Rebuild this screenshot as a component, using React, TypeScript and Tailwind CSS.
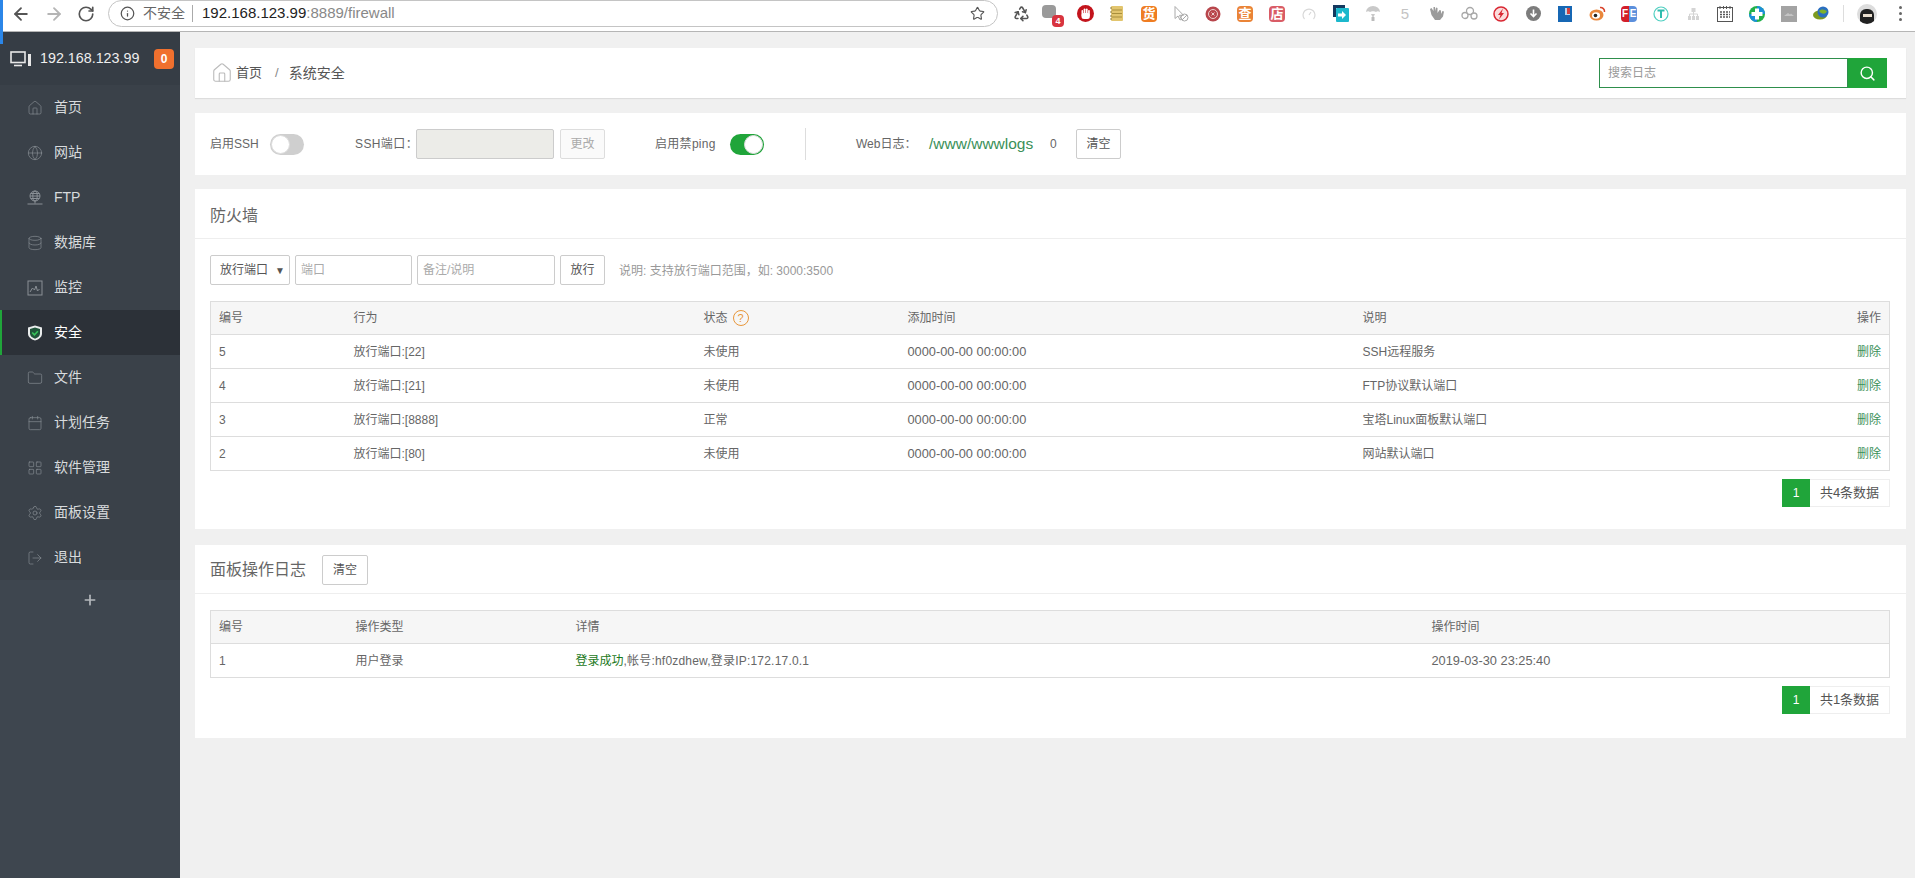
import React from 'react';
import {
  ArrowLeft,
  ArrowRight,
  RotateCw,
  Info,
  Star,
  Recycle,
  Search,
  House,
  Globe,
  Database,
  Folder,
  Calendar,
  LayoutGrid,
  Settings,
  LogOut,
  Plus,
} from 'lucide-react';

const GREEN = 'text-[#3a9058]';

// ---- browser toolbar extension icons ----
const ExtIcon: React.FC<{ children: React.ReactNode }> = ({ children }) => (
  <div className="w-8 h-7 flex items-center justify-center relative">{children}</div>
);

const GlyphBox: React.FC<{ text: string; className: string }> = ({ text, className }) => (
  <div className={`w-4 h-4 rounded-sm flex items-center justify-center text-[13px] leading-none font-bold text-white ${className}`}>
    {text}
  </div>
);

const extensions: React.ReactNode[] = [
  <Recycle key="a" className="w-[17px] h-[17px] text-[#555]" strokeWidth={2.2} />,
  <>
    <div className="w-[14px] h-[13px] rounded-sm bg-[#9a9a9a] -mt-1 -ml-2" />
    <div className="absolute left-[15px] top-[15px] w-[12px] h-[12px] rounded-sm bg-[#d8343f] text-white text-[9px] leading-[12px] font-bold text-center">4</div>
  </>,
  <svg width="17" height="17" viewBox="0 0 17 17">
    <circle cx="8.500" cy="8.500" r="8.500" fill="#c3141c" />
    <g fill="#fff">
      <rect x="4.500" y="5" width="1.700" height="6" rx=".8" />
      <rect x="6.700" y="3.500" width="1.700" height="7" rx=".8" />
      <rect x="8.900" y="3.500" width="1.700" height="7" rx=".8" />
      <rect x="11.100" y="5" width="1.700" height="6" rx=".8" />
      <rect x="4.500" y="8" width="8.300" height="6" rx="2.500" />
    </g>
  </svg>,
  <svg width="16" height="17" viewBox="0 0 16 17">
    <rect x="2" y="1" width="12" height="15" rx="1" fill="#e2c56e" />
    <path d="M3 5h10M3 8.500h10M3 12h10" stroke="#a98f3c" strokeWidth="1" />
    <path d="M1 3h2M1 7h2M1 11h2M1 14h2" stroke="#8a7a45" strokeWidth="1" />
  </svg>,
  <GlyphBox text="货" className="bg-[#ef7d22]" />,
  <svg width="18" height="18" viewBox="0 0 18 18" fill="none" stroke="#aaa" strokeWidth="1">
    <path d="M3 1.500v12l3-2.500 2 4 1.500-.8-2-3.900h4z" />
    <circle cx="12.500" cy="12.500" r="3.500" />
    <path d="M10 15l5-5" />
  </svg>,
  <svg width="16" height="16" viewBox="0 0 16 16">
    <circle cx="8" cy="8" r="7.500" fill="#b8464c" />
    <circle cx="8" cy="8" r="4.500" fill="none" stroke="#eecfcf" strokeWidth="1" />
    <path d="M6.500 6.500l3 3M9.500 6.500l-3 3" stroke="#eecfcf" strokeWidth="1" />
  </svg>,
  <GlyphBox text="查" className="bg-[#ea8437]" />,
  <GlyphBox text="店" className="bg-[#d95c66]" />,
  <svg width="14" height="14" viewBox="0 0 14 14" fill="none" stroke="#d8d8d8" strokeWidth="1.200">
    <path d="M2.500 12a6 6 0 1 1 9 0" />
    <path d="M7 8l2-3" />
  </svg>,
  <svg width="16" height="17" viewBox="0 0 16 17">
    <path d="M0 0h12v3H3v9H0z" fill="#14395f" />
    <rect x="3" y="3" width="13" height="14" rx="1" fill="#1cb8cc" />
    <path d="M5 8.500h4V6l4 4-4 4v-2.500H5z" fill="#fff" />
  </svg>,
  <svg width="16" height="17" viewBox="0 0 16 17" fill="#c9c9c9">
    <path d="M1 7a7 6 0 0 1 14 0c-1.500-1-3-1-4 0-1-1-5-1-6 0-1-1-2.500-1-4 0z" />
    <path d="M6 9l2 4 2-4z" />
    <rect x="6.500" y="12" width="3" height="4" rx=".5" fill="#bbb" />
  </svg>,
  <span className="text-[15px] leading-none text-[#c4c4c4]">5</span>,
  <svg width="17" height="17" viewBox="0 0 17 17" fill="#9b9b9b">
    <path d="M1 4l1.500-1 2 3V2h1.500v4l1-3.500L8.500 3v5l2-3 1.500.5v3.500l1.500-3 1.500.5-1 5-3 3.500H6L2.500 10z" />
  </svg>,
  <svg width="17" height="15" viewBox="0 0 17 15" fill="none" stroke="#a8a8a8" strokeWidth="1.300">
    <circle cx="4" cy="9.500" r="3" />
    <circle cx="9" cy="5" r="3.500" />
    <circle cx="13" cy="10" r="3" />
  </svg>,
  <svg width="16" height="16" viewBox="0 0 16 16">
    <circle cx="8" cy="8" r="7" fill="#fbdcdc" stroke="#d92732" strokeWidth="1.500" />
    <path d="M10 2.500L5 9h2.500L6 13.500 11 7H8.500z" fill="#d92732" />
  </svg>,
  <svg width="15" height="15" viewBox="0 0 15 15">
    <circle cx="7.500" cy="7.500" r="7.500" fill="#7c7c7c" />
    <path d="M7.500 3.500v7M4.500 7.500l3 3 3-3" fill="none" stroke="#fff" strokeWidth="1.600" />
  </svg>,
  <svg width="14" height="16" viewBox="0 0 14 16">
    <rect width="14" height="16" fill="#1667b4" />
    <rect x="7" y="2" width="5" height="7" fill="#b9d3ea" />
    <rect x="9" y="2" width="3" height="6" fill="#d2403e" />
  </svg>,
  <svg width="17" height="15" viewBox="0 0 17 15">
    <ellipse cx="7.500" cy="9" rx="7" ry="5.500" fill="#e9873c" />
    <ellipse cx="7" cy="9.500" rx="4" ry="3.200" fill="#fff" />
    <circle cx="6.500" cy="9.500" r="1.800" fill="#222" />
    <path d="M11 1.500a4 4 0 0 1 4.500 4.500" fill="none" stroke="#d9432c" strokeWidth="1.500" />
  </svg>,
  <div className="w-4 h-4 rounded-sm flex overflow-hidden text-[10px] leading-4 font-bold text-white text-center">
    <div className="w-1/2 bg-[#d31f2a]">F</div>
    <div className="w-1/2 bg-[#5b8fdc]">E</div>
  </div>,
  <svg width="16" height="16" viewBox="0 0 16 16" fill="none">
    <circle cx="8" cy="8" r="7" stroke="#4fcfc0" strokeWidth="1.200" />
    <path d="M4.500 4.500h7M8 4.500V12" stroke="#2fbcae" strokeWidth="2" />
  </svg>,
  <svg width="11" height="12" viewBox="0 0 11 12" fill="#d4d4d4">
    <rect x="3.500" y="0" width="4" height="4" />
    <rect x="0" y="8" width="3" height="4" />
    <rect x="4" y="8" width="3" height="4" />
    <rect x="8" y="8" width="3" height="4" />
    <path d="M1.500 8V6h8v2M5.500 4v4" fill="none" stroke="#d4d4d4" />
  </svg>,
  <svg width="16" height="16" viewBox="0 0 16 16" fill="none" stroke="#555">
    <rect x=".5" y="1.500" width="15" height="14" />
    <path d="M3 0v3M6.500 0v3M9.500 0v3M13 0v3" />
    <path d="M3 6h10M3 8.500h10M3 11h10" strokeWidth="1.400" strokeDasharray="2 1" />
  </svg>,
  <svg width="16" height="16" viewBox="0 0 16 16">
    <circle cx="8" cy="8" r="8" fill="#21b14a" />
    <path d="M8 0a8 8 0 0 1 8 8H8z" fill="#1b8fd9" />
    <path d="M0 8a8 8 0 0 0 8 8V8z" fill="#1b8fd9" />
    <path d="M6 2.500h4V6h3.500v4H10v3.500H6V10H2.500V6H6z" fill="#fff" />
  </svg>,
  <svg width="16" height="16" viewBox="0 0 16 16">
    <rect width="16" height="16" fill="#a3a3a3" />
    <path d="M3 10l4-3 2 1.500 1-1 3 2.500z" fill="#c4c4c4" />
  </svg>,
  <svg width="17" height="15" viewBox="0 0 17 15">
    <ellipse cx="7" cy="9" rx="7" ry="4.500" fill="#7c9a1f" />
    <circle cx="10" cy="6" r="5.500" fill="#2a6fc0" />
    <path d="M6 5c2-2 5-2 8 0-1 3-5 4-8 0z" fill="#7fb22a" />
  </svg>,
];

// ---- sidebar ----
const MonitorIcon = () => (
  <svg width="22" height="16" viewBox="0 0 22 16" fill="none" stroke="#e8e8e8" strokeWidth="1.600">
    <rect x="1" y="1" width="14" height="10.500" />
    <path d="M4 14.500h8" />
    <rect x="18" y="3" width="3" height="12" fill="#e8e8e8" stroke="none" />
  </svg>
);

const FtpIcon = ({ className }: { className?: string }) => (
  <svg className={className} viewBox="0 0 16 16" fill="none" stroke="currentColor" strokeWidth="1">
    <circle cx="8" cy="6" r="5" />
    <ellipse cx="8" cy="6" rx="2.200" ry="5" />
    <path d="M3 6h10M3.800 3.500h8.400M3.800 8.500h8.400M8 11v2.500M.5 14h15" />
  </svg>
);

const ChartIcon = ({ className }: { className?: string }) => (
  <svg className={className} viewBox="0 0 16 16" fill="none" stroke="currentColor" strokeWidth="1">
    <rect x="1" y="1" width="14" height="14" />
    <path d="M3 12l2.500-4 2 2 1.500-4 1.500 5 2-2" />
  </svg>
);

const ShieldIcon = ({ className }: { className?: string }) => (
  <svg className={className} viewBox="0 0 16 16">
    <path d="M8 .5l7 2v6c0 3.500-3 5.800-7 7-4-1.200-7-3.500-7-7v-6z" fill="#e9ecec" />
    <path d="M8 2.500l5 1.500v4.500c0 2.500-2.100 4.200-5 5.200-2.900-1-5-2.700-5-5.200V4z" fill="#20553a" />
    <path d="M5.200 7.500L7.400 9.800l3.500-3.600" fill="none" stroke="#37c45a" strokeWidth="1.600" />
  </svg>
);

const menu = [
  { label: '首页', icon: House },
  { label: '网站', icon: Globe },
  { label: 'FTP', icon: FtpIcon },
  { label: '数据库', icon: Database },
  { label: '监控', icon: ChartIcon },
  { label: '安全', icon: ShieldIcon, active: true },
  { label: '文件', icon: Folder },
  { label: '计划任务', icon: Calendar },
  { label: '软件管理', icon: LayoutGrid },
  { label: '面板设置', icon: Settings },
  { label: '退出', icon: LogOut },
];

const Sidebar = () => (
  <aside className="w-[180px] shrink-0 h-full flex flex-col bg-[#3e464f]">
    <div className="h-[53px] shrink-0 flex items-center pl-[10px] bg-[#363d45] text-[#eee]">
      <MonitorIcon />
      <span className="ml-2 w-[114px] text-[14.300px] whitespace-nowrap">192.168.123.99</span>
      <span className="w-5 h-5 rounded-[4px] bg-[#f0702e] text-white text-[12px] font-bold text-center leading-5">0</span>
    </div>
    <nav className="bg-[#3a4149]">
      {menu.map((item) => {
        const Icon = item.icon as React.ComponentType<{ className?: string; strokeWidth?: number }>;
        return (
          <div
            key={item.label}
            className={`h-[45px] flex items-center pl-[27px] text-[14px] relative ${
              item.active ? 'bg-[#2c3138] text-white' : 'text-[#d8dbdd]'
            }`}
          >
            {item.active && <div className="absolute left-0 top-0 bottom-0 w-[2px] bg-[#20a53a]" />}
            <Icon className="w-4 h-4 text-[#8a9096]" strokeWidth={1} />
            <span className="ml-[11px]">{item.label}</span>
          </div>
        );
      })}
    </nav>
    <div className="h-10 shrink-0 flex items-center justify-center">
      <Plus className="w-4 h-4 text-[#b5b9bd]" strokeWidth={2.5} />
    </div>
  </aside>
);

// ---- shared bits ----
const Toggle = ({ on }: { on?: boolean }) => (
  <div className={`w-[34px] h-[21px] rounded-full relative shrink-0 ${on ? 'bg-[#20a53a]' : 'bg-[#cfcfcf]'}`}>
    <div
      className={`absolute top-[1px] w-[19px] h-[19px] rounded-full bg-white border border-[#ddd] ${on ? 'right-[1px]' : 'left-[1px]'}`}
    />
  </div>
);

const Btn: React.FC<{ children: React.ReactNode; className?: string }> = ({ children, className = '' }) => (
  <div
    className={`h-[30px] shrink-0 border border-[#ccc] rounded-[2px] bg-white flex items-center justify-center text-[12px] text-[#555] ${className}`}
  >
    {children}
  </div>
);

const Pager = ({ total }: { total: string }) => (
  <div className="flex justify-end mt-2">
    <div className="w-[28px] h-7 bg-[#20a53a] text-white text-[12px] flex items-center justify-center">1</div>
    <div className="w-[80px] h-7 border border-[#eee] border-l-0 bg-white text-[#555] text-[13px] flex items-center justify-center">
      {total}
    </div>
  </div>
);

const Th: React.FC<{ children?: React.ReactNode; right?: boolean }> = ({ children, right }) => (
  <th className={`h-[33px] px-2 font-normal text-[12px] text-[#666] bg-[#f6f6f6] border-b border-[#ddd] ${right ? 'text-right' : 'text-left'}`}>
    {children}
  </th>
);

const Td: React.FC<{ children?: React.ReactNode; right?: boolean }> = ({ children, right }) => (
  <td className={`h-[34px] px-2 text-[12px] text-[#666] border-b border-[#ddd] ${right ? 'text-right' : 'text-left'}`}>
    {children}
  </td>
);

const firewallRows = [
  { id: 5, action: '放行端口:[22]', status: '未使用', note: 'SSH远程服务' },
  { id: 4, action: '放行端口:[21]', status: '未使用', note: 'FTP协议默认端口' },
  { id: 3, action: '放行端口:[8888]', status: '正常', note: '宝塔Linux面板默认端口' },
  { id: 2, action: '放行端口:[80]', status: '未使用', note: '网站默认端口' },
];

export default function App() {
  return (
    <div className="w-[1915px] h-[878px] overflow-hidden flex flex-col relative font-['Liberation_Sans','Noto_Sans_CJK_SC',sans-serif] bg-[#f0f0f0]">
      {/* blue sliver at the window edge */}
      <div className="absolute left-0 top-0 w-[3px] h-[44px] bg-[#2b86e8] z-10" />

      {/* browser toolbar */}
      <div className="h-[32px] shrink-0 bg-white border-b border-[#b5b5b5] flex items-center">
        <ArrowLeft className="ml-[11px] w-5 h-5 -mt-1 text-[#555]" strokeWidth={2.2} />
        <ArrowRight className="ml-[13px] w-5 h-5 -mt-1 text-[#b5b5b5]" strokeWidth={2.2} />
        <RotateCw className="ml-[13px] w-[18px] h-[18px] -mt-1 text-[#555]" strokeWidth={2.2} />
        <div className="ml-[13px] w-[890px] h-[27px] -mt-1 border border-[#c4c4c4] rounded-full flex items-center pl-[11px] pr-[12px] bg-white">
          <Info className="w-[15px] h-[15px] text-[#555]" strokeWidth={2} />
          <span className="ml-[8px] text-[14px] text-[#666]">不安全</span>
          <span className="ml-[7px] w-px h-[17px] bg-[#aaa]" />
          <span className="ml-[9px] text-[15px] text-[#222]">
            192.168.123.99<span className="text-[#888]">:8889/firewall</span>
          </span>
          <Star className="ml-auto w-[15px] h-[15px] text-[#555]" strokeWidth={1.800} />
        </div>
        <div className="ml-[7px] flex items-center -mt-1">
          {extensions.map((icon, i) => (
            <ExtIcon key={i}>{icon}</ExtIcon>
          ))}
          <div className="w-px h-[17px] bg-[#ddd] ml-[6px]" />
          <div className="ml-[13px] w-5 h-5 rounded-full bg-[#ddd] flex items-end justify-center overflow-hidden">
            <div className="w-[14px] h-[15px] rounded-t-[6px] bg-[#222] flex items-start justify-center pt-[5px]">
              <div className="w-[9px] h-[3px] bg-[#eadfcf]" />
            </div>
          </div>
          <div className="ml-[22px] flex flex-col gap-[3px]">
            <div className="w-[3px] h-[3px] rounded-full bg-[#666]" />
            <div className="w-[3px] h-[3px] rounded-full bg-[#666]" />
            <div className="w-[3px] h-[3px] rounded-full bg-[#666]" />
          </div>
        </div>
      </div>

      <div className="flex-1 flex min-h-0">
        <Sidebar />

        <main className="flex-1 pl-[15px] pr-[9px] pt-4 text-[#666]">
          {/* breadcrumb + search */}
          <div className="h-[50px] bg-white shadow-[0_1px_1px_rgba(0,0,0,0.08)] flex items-center pl-[16px] pr-[19px]">
            <House className="w-[22px] h-[22px] text-[#bbb]" strokeWidth={1.200} />
            <span className="ml-[3px] text-[13px] text-[#555]">首页</span>
            <span className="ml-[13px] text-[13px] text-[#888]">/</span>
            <span className="ml-[10px] text-[14px] text-[#555]">系统安全</span>
            <div className="ml-auto flex h-[30px] w-[288px]">
              <div className="flex-1 border border-[#2e8f4c] pl-2 flex items-center text-[12px] text-[#999]">搜索日志</div>
              <div className="w-[39px] bg-[#20a53a] flex items-center justify-center">
                <Search className="w-[17px] h-[17px] text-white" strokeWidth={2} />
              </div>
            </div>
          </div>

          {/* ssh / ping / log settings */}
          <div className="mt-[15px] h-[62px] bg-white flex items-center pl-[15px] text-[12px] text-[#666]">
            <span className="w-[46px] whitespace-nowrap">启用SSH</span>
            <div className="ml-[14px]"><Toggle /></div>
            <span className="ml-[51px] w-[57px] whitespace-nowrap tracking-[0.4px]">SSH端口：</span>
            <div className="ml-[4px] w-[138px] h-[30px] bg-[#ecece8] border border-[#ccc] rounded-[2px]" />
            <Btn className="ml-[6px] w-[45px] !text-[#aaa] !bg-[#fafafa] !border-[#ddd]">更改</Btn>
            <span className="ml-[50px] w-[62px] whitespace-nowrap tracking-[0.3px]">启用禁ping</span>
            <div className="ml-[13px]"><Toggle on /></div>
            <div className="ml-[41px] w-px h-[32px] bg-[#ddd]" />
            <span className="ml-[50px] w-[60px] whitespace-nowrap">Web日志：</span>
            <span className={`ml-[13px] w-[106px] text-[15.500px] whitespace-nowrap ${GREEN}`}>/www/wwwlogs</span>
            <span className="ml-[15px] w-[7px]">0</span>
            <Btn className="ml-[19px] w-[45px]">清空</Btn>
          </div>

          {/* firewall */}
          <section className="mt-[14px] bg-white">
            <div className="h-[50px] border-b border-[#eee] flex items-center pl-[15px] pt-[5px] text-[16px] text-[#666]">防火墙</div>
            <div className="pl-[15px] pr-4 pt-4 pb-[22px]">
              <div className="flex items-center h-[30px] text-[12px]">
                <div className="w-[80px] h-[30px] border border-[#ccc] rounded-[2px] flex items-center pl-[9px] text-[#555]">
                  放行端口
                  <span className="ml-[7px] text-[10px]">▼</span>
                </div>
                <div className="ml-[5px] w-[117px] h-[30px] border border-[#ccc] rounded-[2px] flex items-center pl-[5px] text-[#aaa]">端口</div>
                <div className="ml-[5px] w-[138px] h-[30px] border border-[#ccc] rounded-[2px] flex items-center pl-[5px] text-[#aaa]">备注/说明</div>
                <Btn className="ml-[5px] w-[45px]">放行</Btn>
                <span className="ml-[14px] pt-[1px] text-[#999]">说明: 支持放行端口范围，如: 3000:3500</span>
              </div>

              <table className="mt-4 w-full table-fixed border-collapse border border-[#ddd]">
                <colgroup>
                  <col className="w-[135px]" />
                  <col className="w-[350px]" />
                  <col className="w-[204px]" />
                  <col className="w-[455px]" />
                  <col />
                  <col className="w-[60px]" />
                </colgroup>
                <thead>
                  <tr>
                    <Th>编号</Th>
                    <Th>行为</Th>
                    <Th>
                      <span className="inline-flex items-center">
                        状态
                        <span className="ml-[5px] w-4 h-4 rounded-full border border-[#e8963a] text-[#e8963a] text-[11px] leading-[14px] text-center">?</span>
                      </span>
                    </Th>
                    <Th>添加时间</Th>
                    <Th>说明</Th>
                    <Th right>操作</Th>
                  </tr>
                </thead>
                <tbody>
                  {firewallRows.map((row) => (
                    <tr key={row.id}>
                      <Td>{row.id}</Td>
                      <Td>{row.action}</Td>
                      <Td>{row.status}</Td>
                      <Td>
                        <span className="text-[12.800px]">0000-00-00 00:00:00</span>
                      </Td>
                      <Td>{row.note}</Td>
                      <Td right>
                        <span className={GREEN}>删除</span>
                      </Td>
                    </tr>
                  ))}
                </tbody>
              </table>
              <Pager total="共4条数据" />
            </div>
          </section>

          {/* panel log */}
          <section className="mt-4 bg-white">
            <div className="h-[49px] border-b border-[#eee] flex items-center pl-[15px] pt-[2px]">
              <span className="text-[16px] text-[#666]">面板操作日志</span>
              <Btn className="ml-[16px] w-[46px]">清空</Btn>
            </div>
            <div className="pl-[15px] pr-4 pt-4 pb-6">
              <table className="w-full table-fixed border-collapse border border-[#ddd]">
                <colgroup>
                  <col className="w-[137px]" />
                  <col className="w-[220px]" />
                  <col className="w-[856px]" />
                  <col />
                </colgroup>
                <thead>
                  <tr>
                    <Th>编号</Th>
                    <Th>操作类型</Th>
                    <Th>详情</Th>
                    <Th>操作时间</Th>
                  </tr>
                </thead>
                <tbody>
                  <tr>
                    <Td>1</Td>
                    <Td>用户登录</Td>
                    <Td>
                      <span className="text-[#1c7a1c]">登录成功</span>
                      <span className="tracking-[0.2px]">,帐号:hf0zdhew,登录IP:172.17.0.1</span>
                    </Td>
                    <Td>
                      <span className="text-[12.800px]">2019-03-30 23:25:40</span>
                    </Td>
                  </tr>
                </tbody>
              </table>
              <Pager total="共1条数据" />
            </div>
          </section>
        </main>
      </div>
    </div>
  );
}
